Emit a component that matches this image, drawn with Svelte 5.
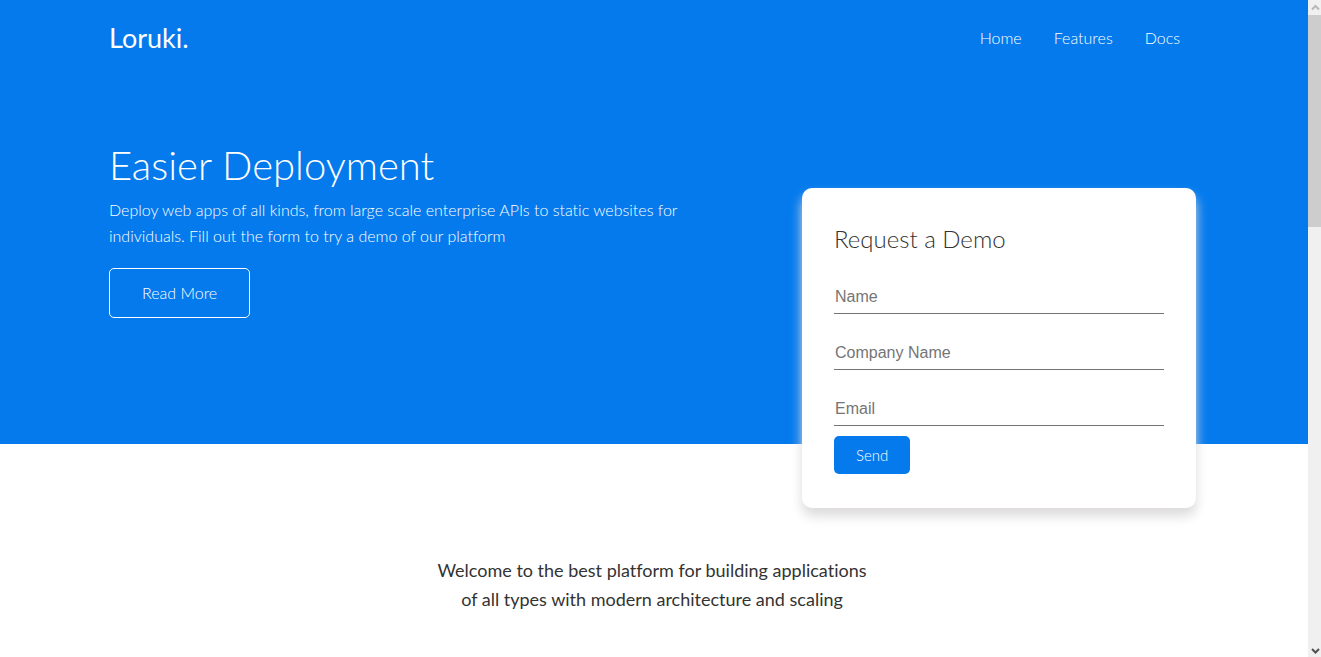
<script>
  const links = ['Home', 'Features', 'Docs'];
  const fields = [
    { id: 'name', label: 'Name', type: 'text' },
    { id: 'company', label: 'Company Name', type: 'text' },
    { id: 'email', label: 'Email', type: 'email' }
  ];
</script>

<div class="page">
  <header class="navbar">
    <div class="container bar">
      <h1 class="logo">Loruki.</h1>
      <nav>
        {#each links as link}
          <a href="#{link.toLowerCase()}">{link}</a>
        {/each}
      </nav>
    </div>
  </header>

  <section class="showcase">
    <div class="container grid">
      <div class="intro">
        <h2>Easier Deployment</h2>
        <p>
          Deploy web apps of all kinds, from large scale enterprise APIs to static websites for
          individuals. Fill out the form to try a demo of our platform
        </p>
        <a class="btn outline" href="#features">Read More</a>
      </div>
      <form class="card">
        <h3>Request a Demo</h3>
        {#each fields as field}
          <input id={field.id} type={field.type} placeholder={field.label} aria-label={field.label} />
        {/each}
        <button type="button" class="btn primary">Send</button>
      </form>
    </div>
  </section>

  <section class="stats">
    <p>Welcome to the best platform for building applications of all types with modern architecture and scaling</p>
  </section>
</div>

<div class="scrollbar" aria-hidden="true">
  <svg class="up" viewBox="0 0 13 15"><path d="M4 9.500 7.500 6 11 9.500" /></svg>
  <div class="thumb"></div>
  <svg class="down" viewBox="0 0 13 15"><path d="M4 7 7.500 10.500 11 7" /></svg>
</div>

<style>
  :global(body) {
    overflow: hidden;
    background: #fff;
  }

  :global(#app) {
    display: flex;
    height: 100vh;
    font-family: Lato, sans-serif;
    font-weight: 300;
    font-variant-ligatures: none;
    line-height: 26px;
    color: #333;
  }

  .page {
    flex: 1;
    min-width: 0;
    overflow: hidden;
  }

  h1, h2, h3, p {
    margin: 0;
  }

  a {
    color: #fff;
    text-decoration: none;
  }

  .container {
    box-sizing: border-box;
    max-width: 1100px;
    margin: 0 auto;
    padding: 0 5px;
  }

  .navbar, .showcase {
    background: #047aed;
    color: #fff;
  }

  .bar {
    display: flex;
    align-items: center;
    justify-content: space-between;
    height: 76px;
  }

  .logo {
    font-size: 27px;
    font-weight: 400;
  }

  nav {
    display: flex;
    gap: 32px;
    padding-right: 19px;
  }

  .showcase {
    height: 368px;
  }

  .grid {
    display: grid;
    grid-template-columns: 1fr 394px;
    gap: 112px;
    padding-right: 8px;
  }

  .intro {
    padding-top: 65px;
  }

  h2 {
    font-size: 40px;
    font-weight: 300;
    line-height: 48px;
  }

  .intro p {
    margin: 8px 0 19px;
  }

  .btn {
    display: inline-block;
    box-sizing: border-box;
    border-radius: 5px;
    font: 300 16px/26px Lato, sans-serif;
  }

  .outline {
    border: 1px solid #fff;
    padding: 11px 32px;
  }

  .card {
    box-sizing: border-box;
    position: relative;
    height: 320px;
    margin-top: 112px;
    border-radius: 10px;
    padding: 32px;
    background: #fff;
    color: #333;
    box-shadow: 0 8px 12px #dddbdc;
  }

  h3 {
    margin: 3px 0 23px;
    font-size: 24px;
    font-weight: 300;
    line-height: 32px;
  }

  input {
    display: block;
    box-sizing: border-box;
    width: 100%;
    height: 36px;
    margin: 0 0 20px;
    border: 0;
    border-bottom: 1px solid #757575;
    padding: 2px 1px 0;
    background: transparent;
    font: 16px "Liberation Sans", Arial, sans-serif;
    outline: none;
  }

  input::placeholder {
    color: #757575;
  }

  .primary {
    display: block;
    margin-top: -10px;
    border: 0;
    padding: 6px 22px;
    background: #047aed;
    color: #fff;
    font-size: 15px;
  }

  .stats {
    padding: 112px 24px 0 20px;
    text-align: center;
    font-size: 18px;
    font-weight: 400;
    line-height: 29px;
  }

  .stats p {
    max-width: 440px;
    margin: 0 auto;
  }

  .scrollbar {
    display: flex;
    flex-direction: column;
    flex: 0 0 13px;
    background: #f0f0f0;
  }

  .scrollbar svg {
    width: 13px;
    height: 15px;
    fill: none;
    stroke: #505050;
    stroke-width: 2;
  }

  .scrollbar .up {
    stroke: #b8b8b8;
  }

  .thumb {
    height: 212px;
    background: #cdcdcd;
  }

  .down {
    margin-top: auto;
  }
</style>
